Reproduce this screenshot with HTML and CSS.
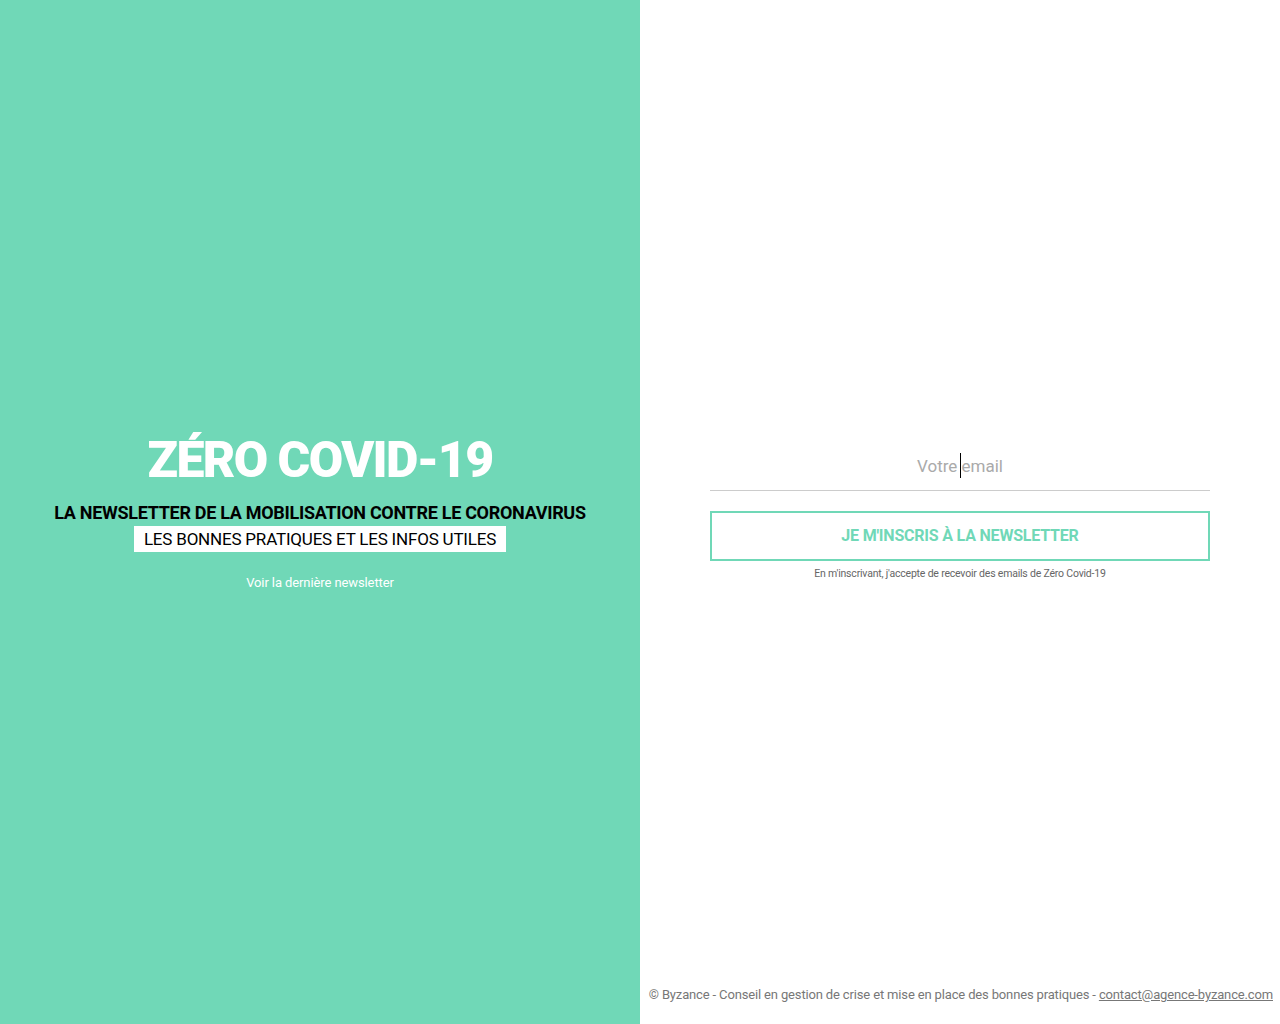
FILE: index.html
```html
<!DOCTYPE html>
<html lang="fr">
<head>
<meta charset="utf-8">
<title>Zéro Covid-19</title>
<link rel="stylesheet" href="styles.css">
</head>
<body>
<div class="page">
  <section class="left">
    <h1 class="title">ZÉRO COVID-19</h1>
    <h2 class="subtitle">LA NEWSLETTER DE LA MOBILISATION CONTRE LE CORONAVIRUS</h2>
    <p class="tagline"><span>LES BONNES PRATIQUES ET LES INFOS UTILES</span></p>
    <a class="last" href="#">Voir la dernière newsletter</a>
  </section>
  <section class="right">
    <form class="form">
      <div class="field">
        <input class="email" type="email" placeholder="Votre email" autofocus>
      </div>
      <button class="submit" type="button">JE M'INSCRIS À LA NEWSLETTER</button>
      <p class="legal">En m'inscrivant, j'accepte de recevoir des emails de Zéro Covid-19</p>
    </form>
    <footer class="footer">© Byzance - Conseil en gestion de crise et mise en place des bonnes pratiques - <a href="#">contact@agence-byzance.com</a></footer>
  </section>
</div>
</body>
</html>
```
FILE: styles.css
```css
* { box-sizing: border-box; }
html, body { margin: 0; padding: 0; }
body {
  font-family: Roboto, "Open Sans", sans-serif;
  background: #fff;
}
.page {
  display: flex;
  height: 1024px;
}
.left {
  width: 640px;
  background: #70d8b7;
  display: flex;
  flex-direction: column;
  align-items: center;
  justify-content: center;
  padding-top: 4px;
}
.title {
  margin: 0;
  font-family: Roboto, sans-serif;
  font-weight: 900;
  font-size: 50px;
  letter-spacing: -1.6px;
  line-height: 44px;
  color: #fff;
}
.subtitle {
  margin: 20px 0 0;
  font-weight: 700;
  font-size: 18px;
  letter-spacing: -0.3px;
  line-height: 22px;
  color: #000;
}
.tagline {
  margin: 2px 0 0;
  line-height: 26px;
}
.tagline span {
  display: inline-block;
  background: #fff;
  color: #000;
  font-size: 17px;
  letter-spacing: -0.2px;
  padding: 0 10px;
}
.last {
  margin-top: 22px;
  font-size: 13px;
  color: #fff;
  text-decoration: none;
  letter-spacing: -0.1px;
}
.right {
  width: 640px;
  display: flex;
  flex-direction: column;
}
.form {
  flex: 1;
  display: flex;
  flex-direction: column;
  align-items: center;
  justify-content: center;
  padding-top: 44px;
}
.field {
  position: relative;
  width: 500px;
}
.field::after {
  content: "";
  position: absolute;
  left: 250px;
  top: 1px;
  width: 1px;
  height: 25px;
  background: #000;
}
.email {
  display: block;
  width: 500px;
  height: 39px;
  border: 0;
  border-bottom: 1px solid #ccc;
  outline: none;
  text-align: center;
  font-family: Roboto, sans-serif;
  font-size: 17px;
  color: #333;
  caret-color: transparent;
  padding: 0 0 10px;
  background: transparent;
}
.email::placeholder { color: #aaa; }
.submit {
  margin-top: 20px;
  width: 500px;
  height: 50px;
  border: 2px solid #70d8b7;
  background: #fff;
  color: #70d8b7;
  font-family: Roboto, sans-serif;
  font-weight: 700;
  font-size: 16px;
  letter-spacing: -0.2px;
}
.legal {
  margin: 6px 0 0;
  font-size: 10.5px;
  color: #666;
  letter-spacing: -0.2px;
}
.footer {
  text-align: right;
  padding: 0 7px 22px 0;
  font-size: 13px;
  color: #777;
  letter-spacing: -0.15px;
  white-space: nowrap;
}
.footer a { color: #777; }
```
